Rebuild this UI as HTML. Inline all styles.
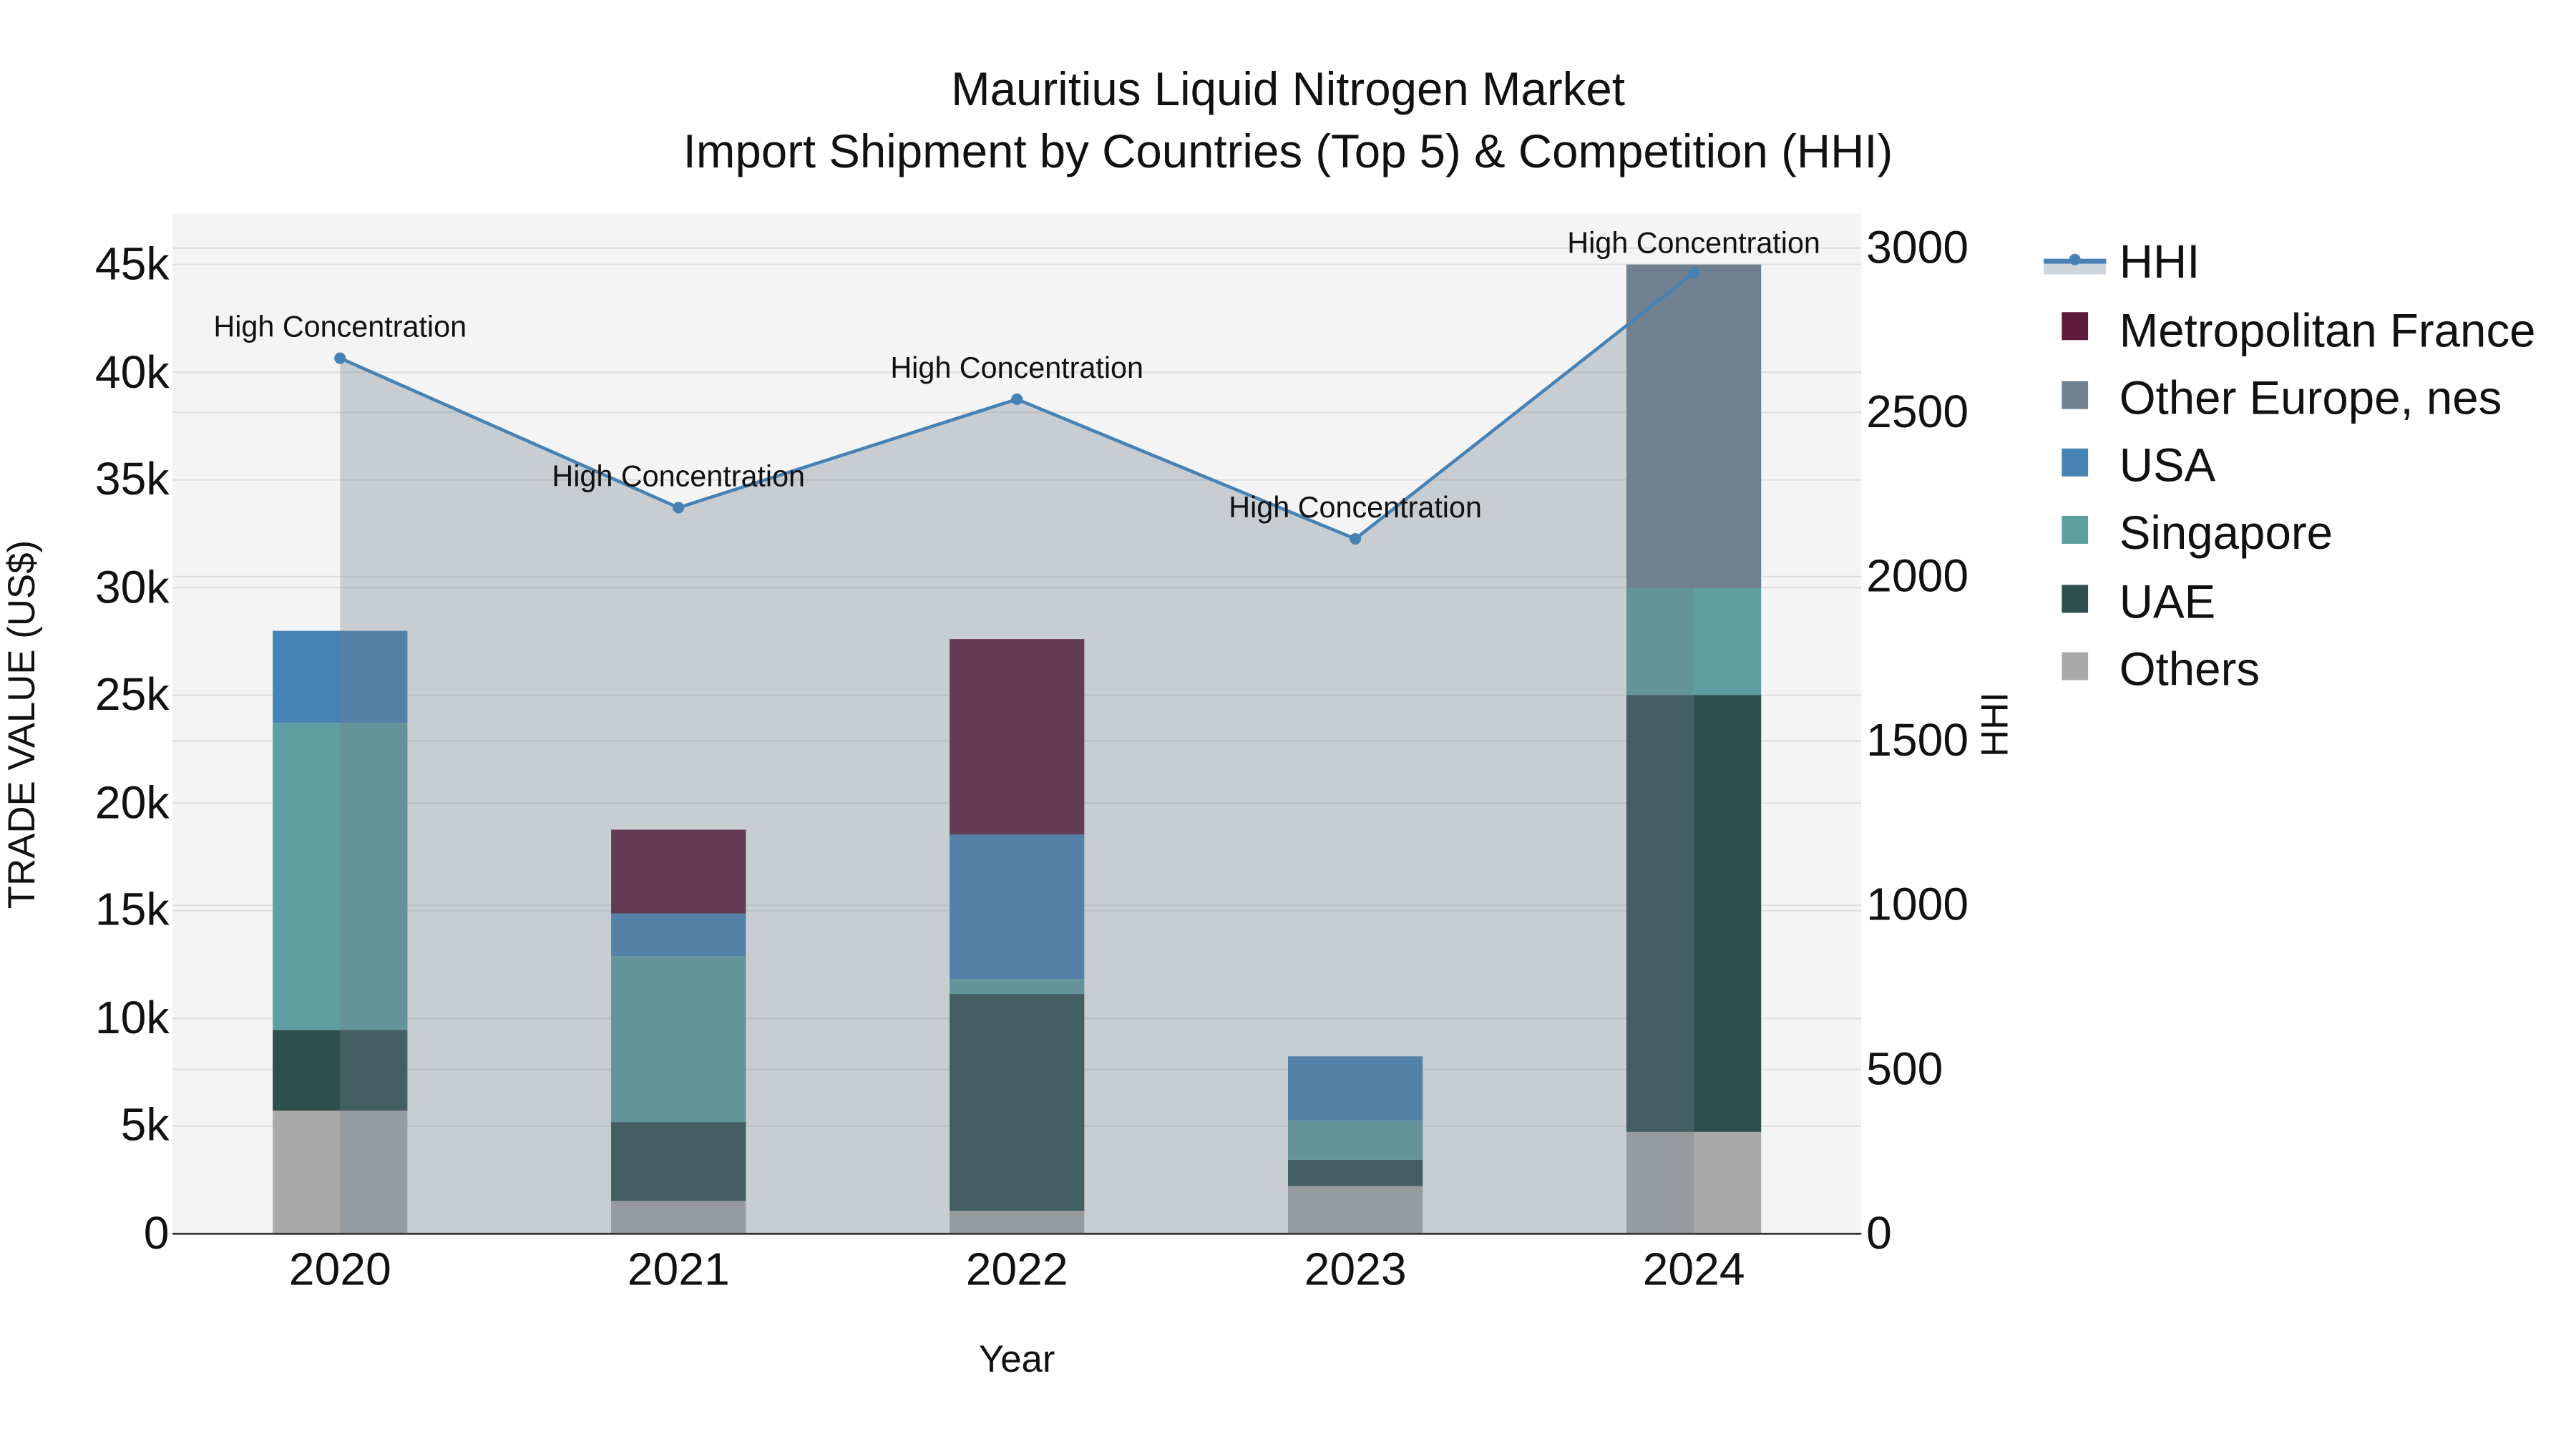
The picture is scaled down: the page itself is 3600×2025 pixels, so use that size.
<!DOCTYPE html>
<html><head><meta charset="utf-8"><style>html,body{margin:0;padding:0;background:#fff}svg{display:block}text{font-family:"Liberation Sans",sans-serif;fill:#111}</style></head>
<body>
<svg width="3600" height="2025" viewBox="0 0 1568 882" xmlns="http://www.w3.org/2000/svg">
<rect width="1568" height="882" fill="#fff"/>
<rect x="105" y="130" width="1028" height="621" fill="#f4f4f4"/>
<g stroke="#e0e0e0" stroke-width="1">
<line x1="105" x2="1133" y1="685.4" y2="685.4"/><line x1="105" x2="1133" y1="619.9" y2="619.9"/><line x1="105" x2="1133" y1="554.3" y2="554.3"/><line x1="105" x2="1133" y1="488.8" y2="488.8"/><line x1="105" x2="1133" y1="423.2" y2="423.2"/><line x1="105" x2="1133" y1="357.7" y2="357.7"/><line x1="105" x2="1133" y1="292.1" y2="292.1"/><line x1="105" x2="1133" y1="226.6" y2="226.6"/><line x1="105" x2="1133" y1="161" y2="161"/>
<line x1="105" x2="1133" y1="651" y2="651"/><line x1="105" x2="1133" y1="551" y2="551"/><line x1="105" x2="1133" y1="451" y2="451"/><line x1="105" x2="1133" y1="351" y2="351"/><line x1="105" x2="1133" y1="251" y2="251"/><line x1="105" x2="1133" y1="151" y2="151"/>
</g>
<g>
<rect x="166" y="676" width="82" height="75" fill="#a9a9a9"/><rect x="166" y="627" width="82" height="49" fill="#2f4f4f"/><rect x="166" y="440" width="82" height="187" fill="#5f9ea0"/><rect x="166" y="384" width="82" height="56" fill="#4682b4"/>
<rect x="372" y="731" width="82" height="20" fill="#a9a9a9"/><rect x="372" y="683" width="82" height="48" fill="#2f4f4f"/><rect x="372" y="582" width="82" height="101" fill="#5f9ea0"/><rect x="372" y="556" width="82" height="26" fill="#4682b4"/><rect x="372" y="505" width="82" height="51" fill="#5e1a3a"/>
<rect x="578" y="737" width="82" height="14" fill="#a9a9a9"/><rect x="578" y="605" width="82" height="132" fill="#2f4f4f"/><rect x="578" y="596" width="82" height="9" fill="#5f9ea0"/><rect x="578" y="508" width="82" height="88" fill="#4682b4"/><rect x="578" y="389" width="82" height="119" fill="#5e1a3a"/>
<rect x="784" y="722" width="82" height="29" fill="#a9a9a9"/><rect x="784" y="706" width="82" height="16" fill="#2f4f4f"/><rect x="784" y="682" width="82" height="24" fill="#5f9ea0"/><rect x="784" y="643" width="82" height="39" fill="#4682b4"/>
<rect x="990" y="689" width="82" height="62" fill="#a9a9a9"/><rect x="990" y="423" width="82" height="266" fill="#2f4f4f"/><rect x="990" y="358" width="82" height="65" fill="#5f9ea0"/><rect x="990" y="161" width="82" height="197" fill="#708090"/>
</g>
<polygon points="207,751 207,218 413,309 619,243 825,328 1031,166 1031,751" fill="rgb(112,128,144)" fill-opacity="0.33"/>
<polyline points="207,218 413,309 619,243 825,328 1031,166" fill="none" stroke="#4682b4" stroke-width="2"/>
<g fill="#4682b4"><circle cx="207" cy="218" r="3.5"/><circle cx="413" cy="309" r="3.5"/><circle cx="619" cy="243" r="3.5"/><circle cx="825" cy="328" r="3.5"/><circle cx="1031" cy="166" r="3.5"/></g>
<line x1="105" x2="1133" y1="751" y2="751" stroke="#333" stroke-width="1.2"/>
<g font-size="18" text-anchor="middle">
<text x="207" y="205">High Concentration</text><text x="413" y="296">High Concentration</text><text x="619" y="230">High Concentration</text><text x="825" y="315">High Concentration</text><text x="1031" y="154">High Concentration</text>
</g>
<g font-size="28.5" text-anchor="middle">
<text x="784" y="64">Mauritius Liquid Nitrogen Market</text>
<text x="784" y="102">Import Shipment by Countries (Top 5) &amp; Competition (HHI)</text>
</g>
<g font-size="28" text-anchor="end">
<text x="103" y="760">0</text><text x="103" y="694">5k</text><text x="103" y="629">10k</text><text x="103" y="563">15k</text><text x="103" y="498">20k</text><text x="103" y="432">25k</text><text x="103" y="367">30k</text><text x="103" y="301">35k</text><text x="103" y="236">40k</text><text x="103" y="170">45k</text>
</g>
<g font-size="28">
<text x="1136" y="760">0</text><text x="1136" y="660">500</text><text x="1136" y="560">1000</text><text x="1136" y="460">1500</text><text x="1136" y="360">2000</text><text x="1136" y="260">2500</text><text x="1136" y="160">3000</text>
</g>
<g font-size="28" text-anchor="middle">
<text x="207" y="782">2020</text><text x="413" y="782">2021</text><text x="619" y="782">2022</text><text x="825" y="782">2023</text><text x="1031" y="782">2024</text>
</g>
<text x="619" y="835" font-size="23" text-anchor="middle">Year</text>
<text transform="translate(21,441) rotate(-90)" font-size="23" text-anchor="middle">TRADE VALUE (US$)</text>
<text transform="translate(1222,441) rotate(-90)" font-size="23" text-anchor="middle">HHI</text>
<rect x="1244" y="159" width="38" height="8" fill="#cfd5dc"/>
<line x1="1244" x2="1282" y1="159" y2="159" stroke="#4682b4" stroke-width="3"/>
<circle cx="1263" cy="158" r="3.5" fill="#4682b4"/>
<rect x="1255" y="190" width="16" height="17" fill="#5e1a3a"/>
<rect x="1255" y="232" width="16" height="17" fill="#708090"/>
<rect x="1255" y="273" width="16" height="17" fill="#4682b4"/>
<rect x="1255" y="314" width="16" height="17" fill="#5f9ea0"/>
<rect x="1255" y="356" width="16" height="17" fill="#2f4f4f"/>
<rect x="1255" y="397" width="16" height="17" fill="#a9a9a9"/>
<g font-size="28.5">
<text x="1290" y="169">HHI</text><text x="1290" y="211">Metropolitan France</text><text x="1290" y="252">Other Europe, nes</text><text x="1290" y="293">USA</text><text x="1290" y="334">Singapore</text><text x="1290" y="376">UAE</text><text x="1290" y="417">Others</text>
</g>
</svg>
</body></html>
